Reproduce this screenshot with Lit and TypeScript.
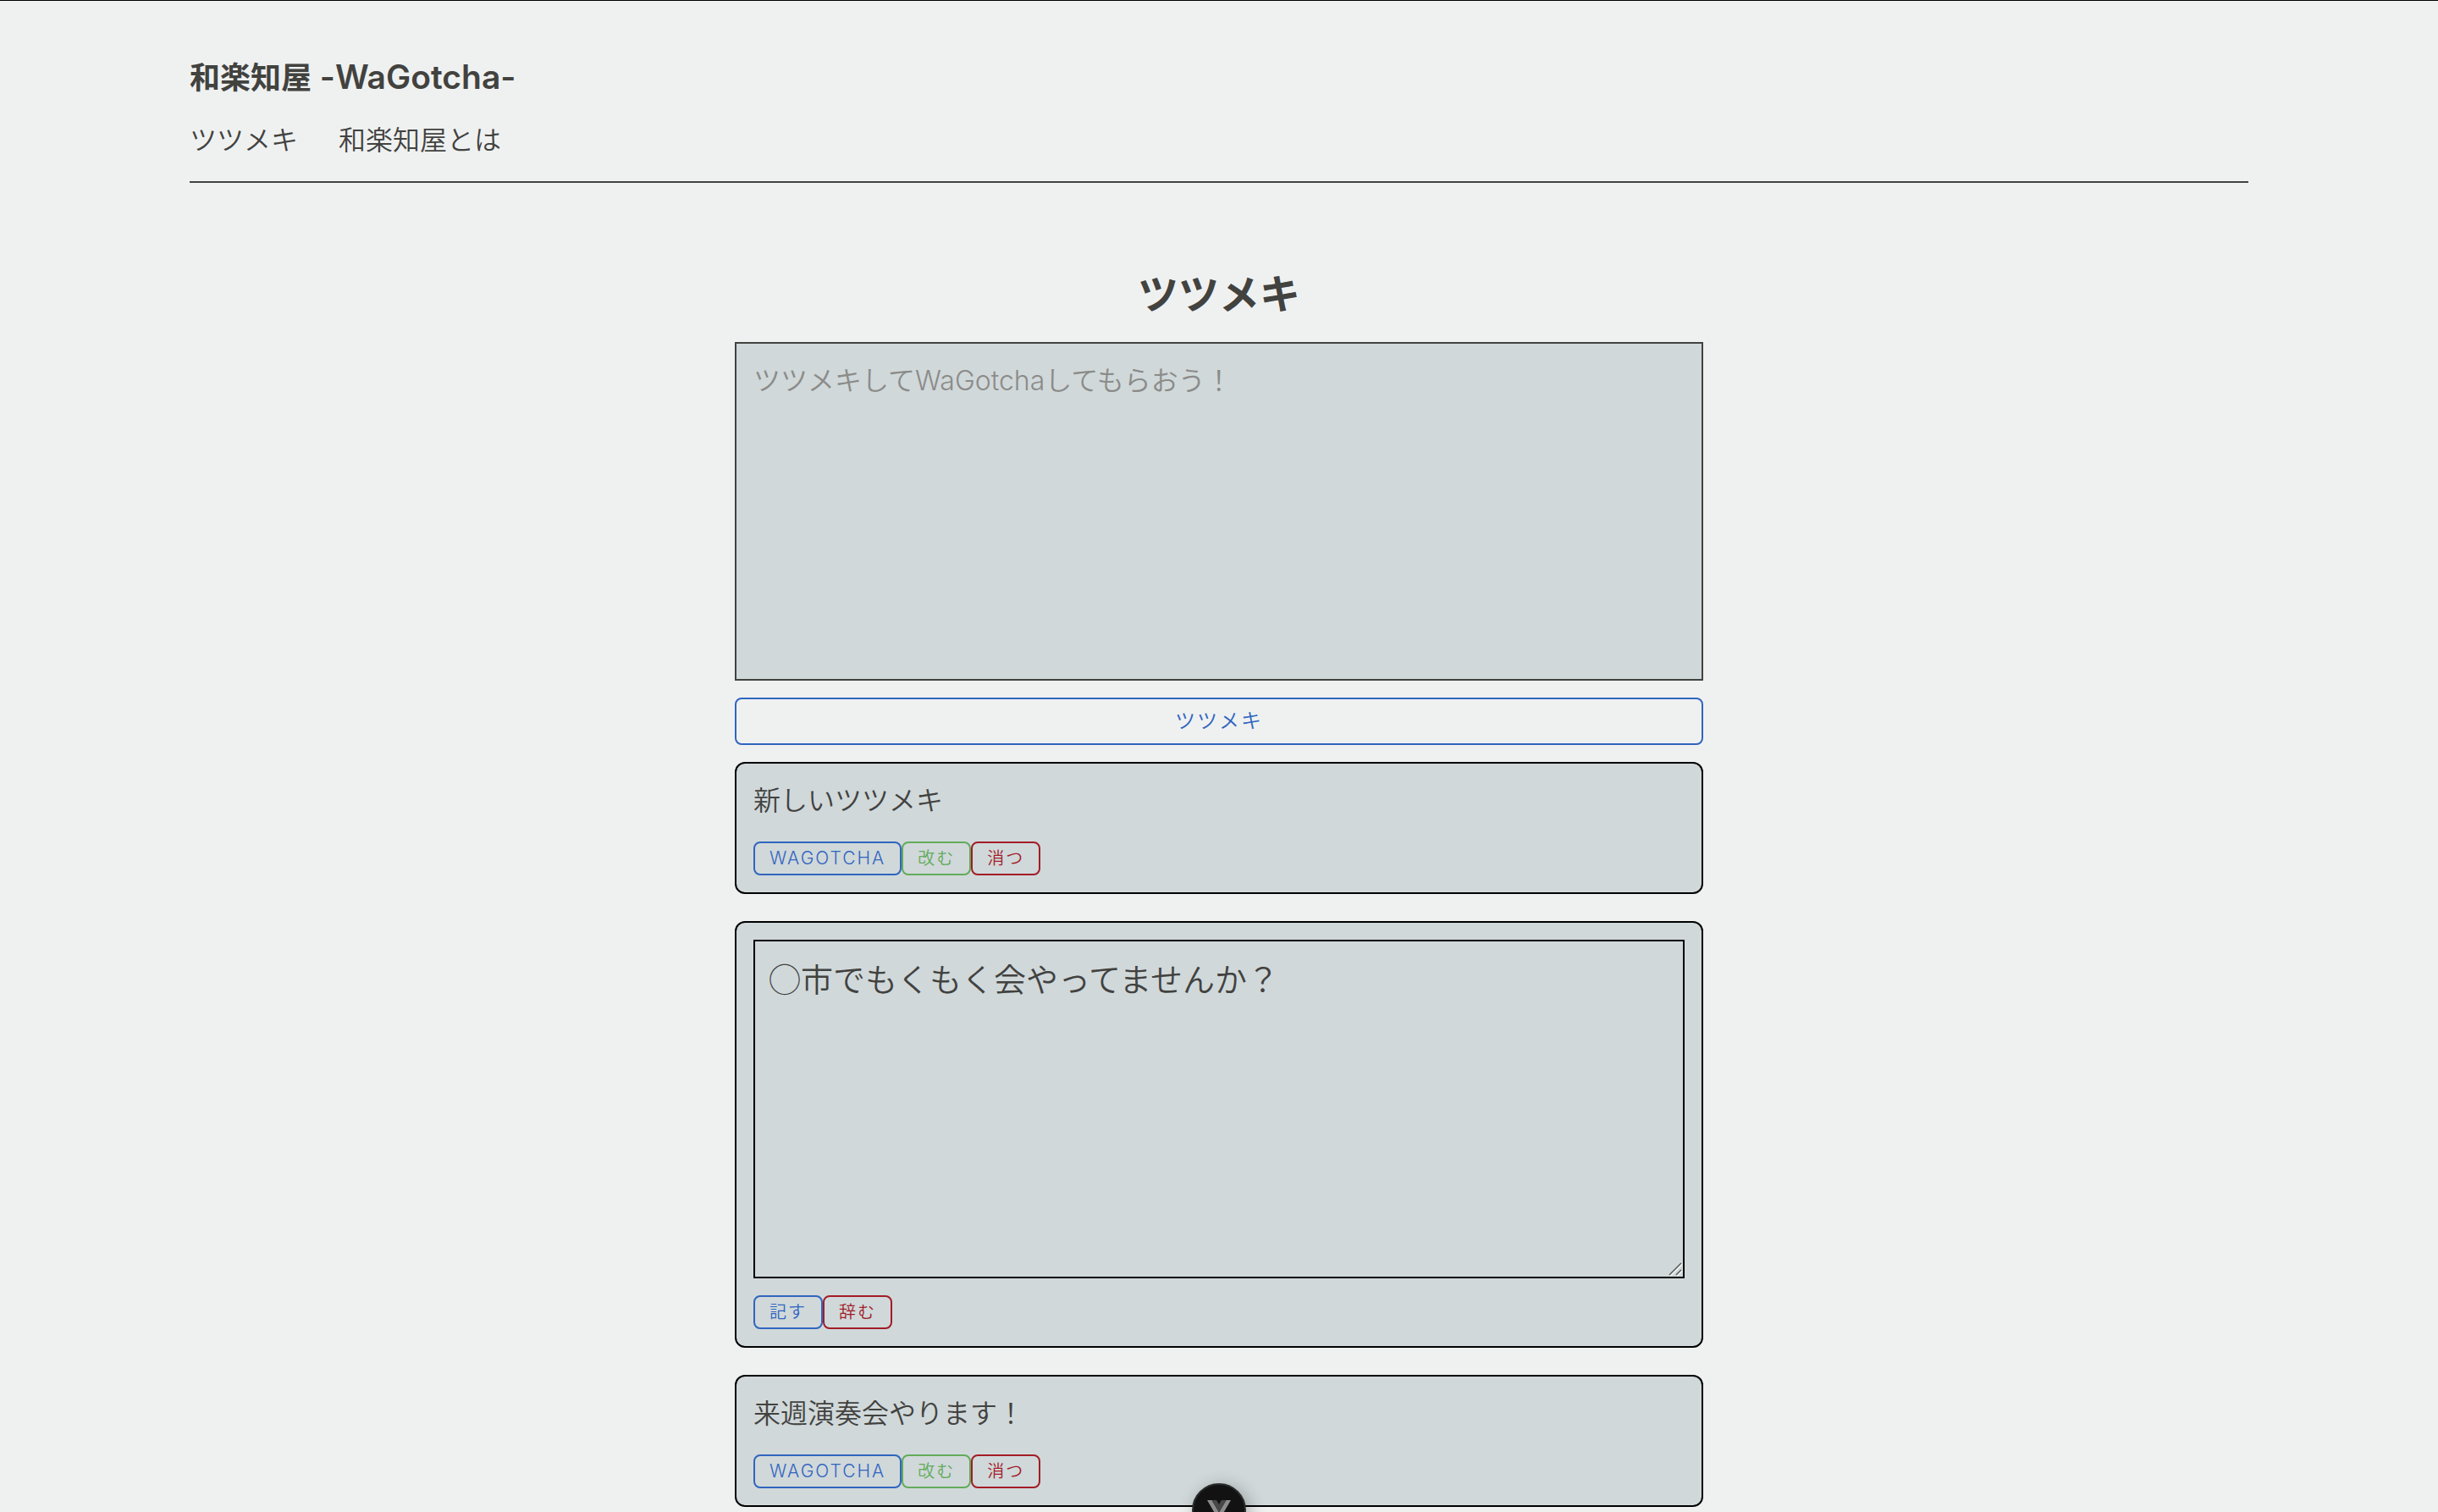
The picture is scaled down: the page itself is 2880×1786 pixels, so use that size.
import { LitElement, html, css } from "lit";
import { customElement, property, state } from "lit/decorators.js";

type Post = { id: number; text: string; editing: boolean };

const controls = css`
  * {
    box-sizing: border-box;
  }
  .btn {
    height: 40px;
    padding: 0 17px;
    border: 2px solid currentColor;
    border-radius: 8px;
    background: transparent;
    font-family: inherit;
    font-size: 20px;
    font-weight: 350;
    line-height: 36px;
    letter-spacing: 2px;
    text-transform: uppercase;
    white-space: nowrap;
    cursor: pointer;
  }
  .blue {
    color: #3065bf;
  }
  .green {
    color: #63ab5a;
  }
  .red {
    color: #a31c26;
  }
  .area {
    display: block;
    width: 100%;
    height: 400px;
    margin: 0;
    background: #d0d8da;
    color: #42423f;
    font-family: inherit;
    font-weight: 350;
    border-radius: 0;
    resize: none;
    outline: none;
  }
`;

@customElement("post-card")
export class PostCard extends LitElement {
  @property({ attribute: false }) post!: Post;

  static styles = [
    controls,
    css`
      :host {
        display: block;
      }
      .card {
        padding: 20px;
        border: 2px solid #000;
        border-radius: 12px;
        background: #d0d8da;
      }
      .text {
        margin: 0 0 24px;
        font-size: 32px;
        line-height: 48px;
      }
      .editor {
        position: relative;
        margin-bottom: 20px;
      }
      .edit {
        padding: 16px;
        border: 2px solid #000;
        font-family: "Noto Sans CJK JP", sans-serif;
        font-size: 38px;
        line-height: 54px;
      }
      .grip {
        position: absolute;
        right: 2px;
        bottom: 2px;
        width: 18px;
        height: 18px;
        pointer-events: none;
      }
      .actions {
        display: flex;
      }
      .latin {
        font-size: 21px;
      }
    `,
  ];

  render() {
    const { text, editing, id } = this.post;
    return html`<article class="card">
      ${editing
        ? html`<div class="editor">
              <textarea class="area edit" id="edit-${id}" aria-label="改む" .value=${text}></textarea>
              <svg class="grip" viewBox="0 0 18 18" fill="none" aria-hidden="true">
                <path d="M3 17L17 3M11 17L17 11" stroke="#f2f4f4" stroke-width="2" />
                <path d="M2 16L16 2M10 16L16 10" stroke="#555957" stroke-width="1.5" />
              </svg>
            </div>
            <div class="actions">
              <button type="button" class="btn blue">記す</button>
              <button type="button" class="btn red">辞む</button>
            </div>`
        : html`<p class="text">${text}</p>
            <div class="actions">
              <button type="button" class="btn blue latin">WaGotcha</button>
              <button type="button" class="btn green">改む</button>
              <button type="button" class="btn red">消つ</button>
            </div>`}
    </article>`;
  }
}

@customElement("app-root")
export class AppRoot extends LitElement {
  @state() private posts: Post[] = [
    { id: 1, text: "新しいツツメキ", editing: false },
    { id: 2, text: "◯市でもくもく会やってませんか？", editing: true },
    { id: 3, text: "来週演奏会やります！", editing: false },
  ];

  static styles = [
    controls,
    css`
      :host {
        display: block;
        min-height: 100vh;
        overflow: hidden;
        border-top: 1px solid #000;
        background: #eff1f1;
        color: #42423f;
        font-family: Inter, "Noto Sans CJK JP", sans-serif;
        font-weight: 350;
        box-sizing: border-box;
      }
      .header {
        margin: 0 224px;
        padding: 64px 0 24px;
        border-bottom: 2px solid #42423f;
      }
      .brand {
        margin: 0 0 22px;
        font-size: 36px;
        font-weight: 600;
        line-height: 55px;
      }
      .latin {
        font-size: 39px;
        line-height: 1;
      }
      .nav {
        display: flex;
        gap: 48px;
        font-size: 32px;
        line-height: 48px;
      }
      .link {
        color: inherit;
        text-decoration: none;
      }
      .main {
        max-width: 1144px;
        margin: 0 auto;
        padding-top: 96px;
      }
      .title {
        margin: 0 0 20px;
        font-size: 48px;
        font-weight: 700;
        line-height: 72px;
        text-align: center;
      }
      .compose {
        padding: 20px;
        border: 2px solid #42423f;
        font-size: 32px;
        line-height: 48px;
      }
      .compose::placeholder {
        color: #8b8b88;
        opacity: 1;
      }
      .submit {
        display: block;
        width: 100%;
        height: 56px;
        margin: 20px 0;
        font-size: 24px;
        line-height: 52px;
      }
      .list {
        display: flex;
        flex-direction: column;
        gap: 32px;
      }
      .badge {
        position: fixed;
        left: 50%;
        bottom: -30px;
        width: 64px;
        height: 64px;
        margin-left: -32px;
        padding: 0;
        border: 2px solid #2a2c2c;
        border-radius: 50%;
        background: #121212;
        box-shadow: 4px 4px 20px rgba(0, 0, 0, 0.3);
      }
      .mark {
        display: block;
        width: 28px;
        height: 24px;
        margin: 0 auto;
      }
      @media (max-width: 1200px) {
        .header,
        .main {
          margin: 0 20px;
        }
      }
    `,
  ];

  render() {
    return html`
      <header class="header">
        <p class="brand">和楽知屋<span class="latin"> -WaGotcha-</span></p>
        <nav class="nav">
          <a class="link" href="#tsutsumeki">ツツメキ</a>
          <a class="link" href="#about">和楽知屋とは</a>
        </nav>
      </header>
      <main class="main">
        <h1 class="title">ツツメキ</h1>
        <form @submit=${(e: Event) => e.preventDefault()}>
          <textarea
            class="area compose"
            aria-label="ツツメキ"
            placeholder="ツツメキしてWaGotchaしてもらおう！"
          ></textarea>
          <button type="submit" class="btn blue submit">ツツメキ</button>
        </form>
        <section class="list">
          ${this.posts.map((post) => html`<post-card .post=${post}></post-card>`)}
        </section>
      </main>
      <button type="button" class="badge" aria-label="Vue">
        <svg class="mark" viewBox="0 0 28 24" aria-hidden="true">
          <path d="M0 0H5.5L14 14.5L22.5 0H28L14 24Z" fill="#8c8c8c" />
          <path d="M5.5 0H11L14 5L17 0H22.5L14 14.5Z" fill="#484848" />
        </svg>
      </button>
    `;
  }
}
